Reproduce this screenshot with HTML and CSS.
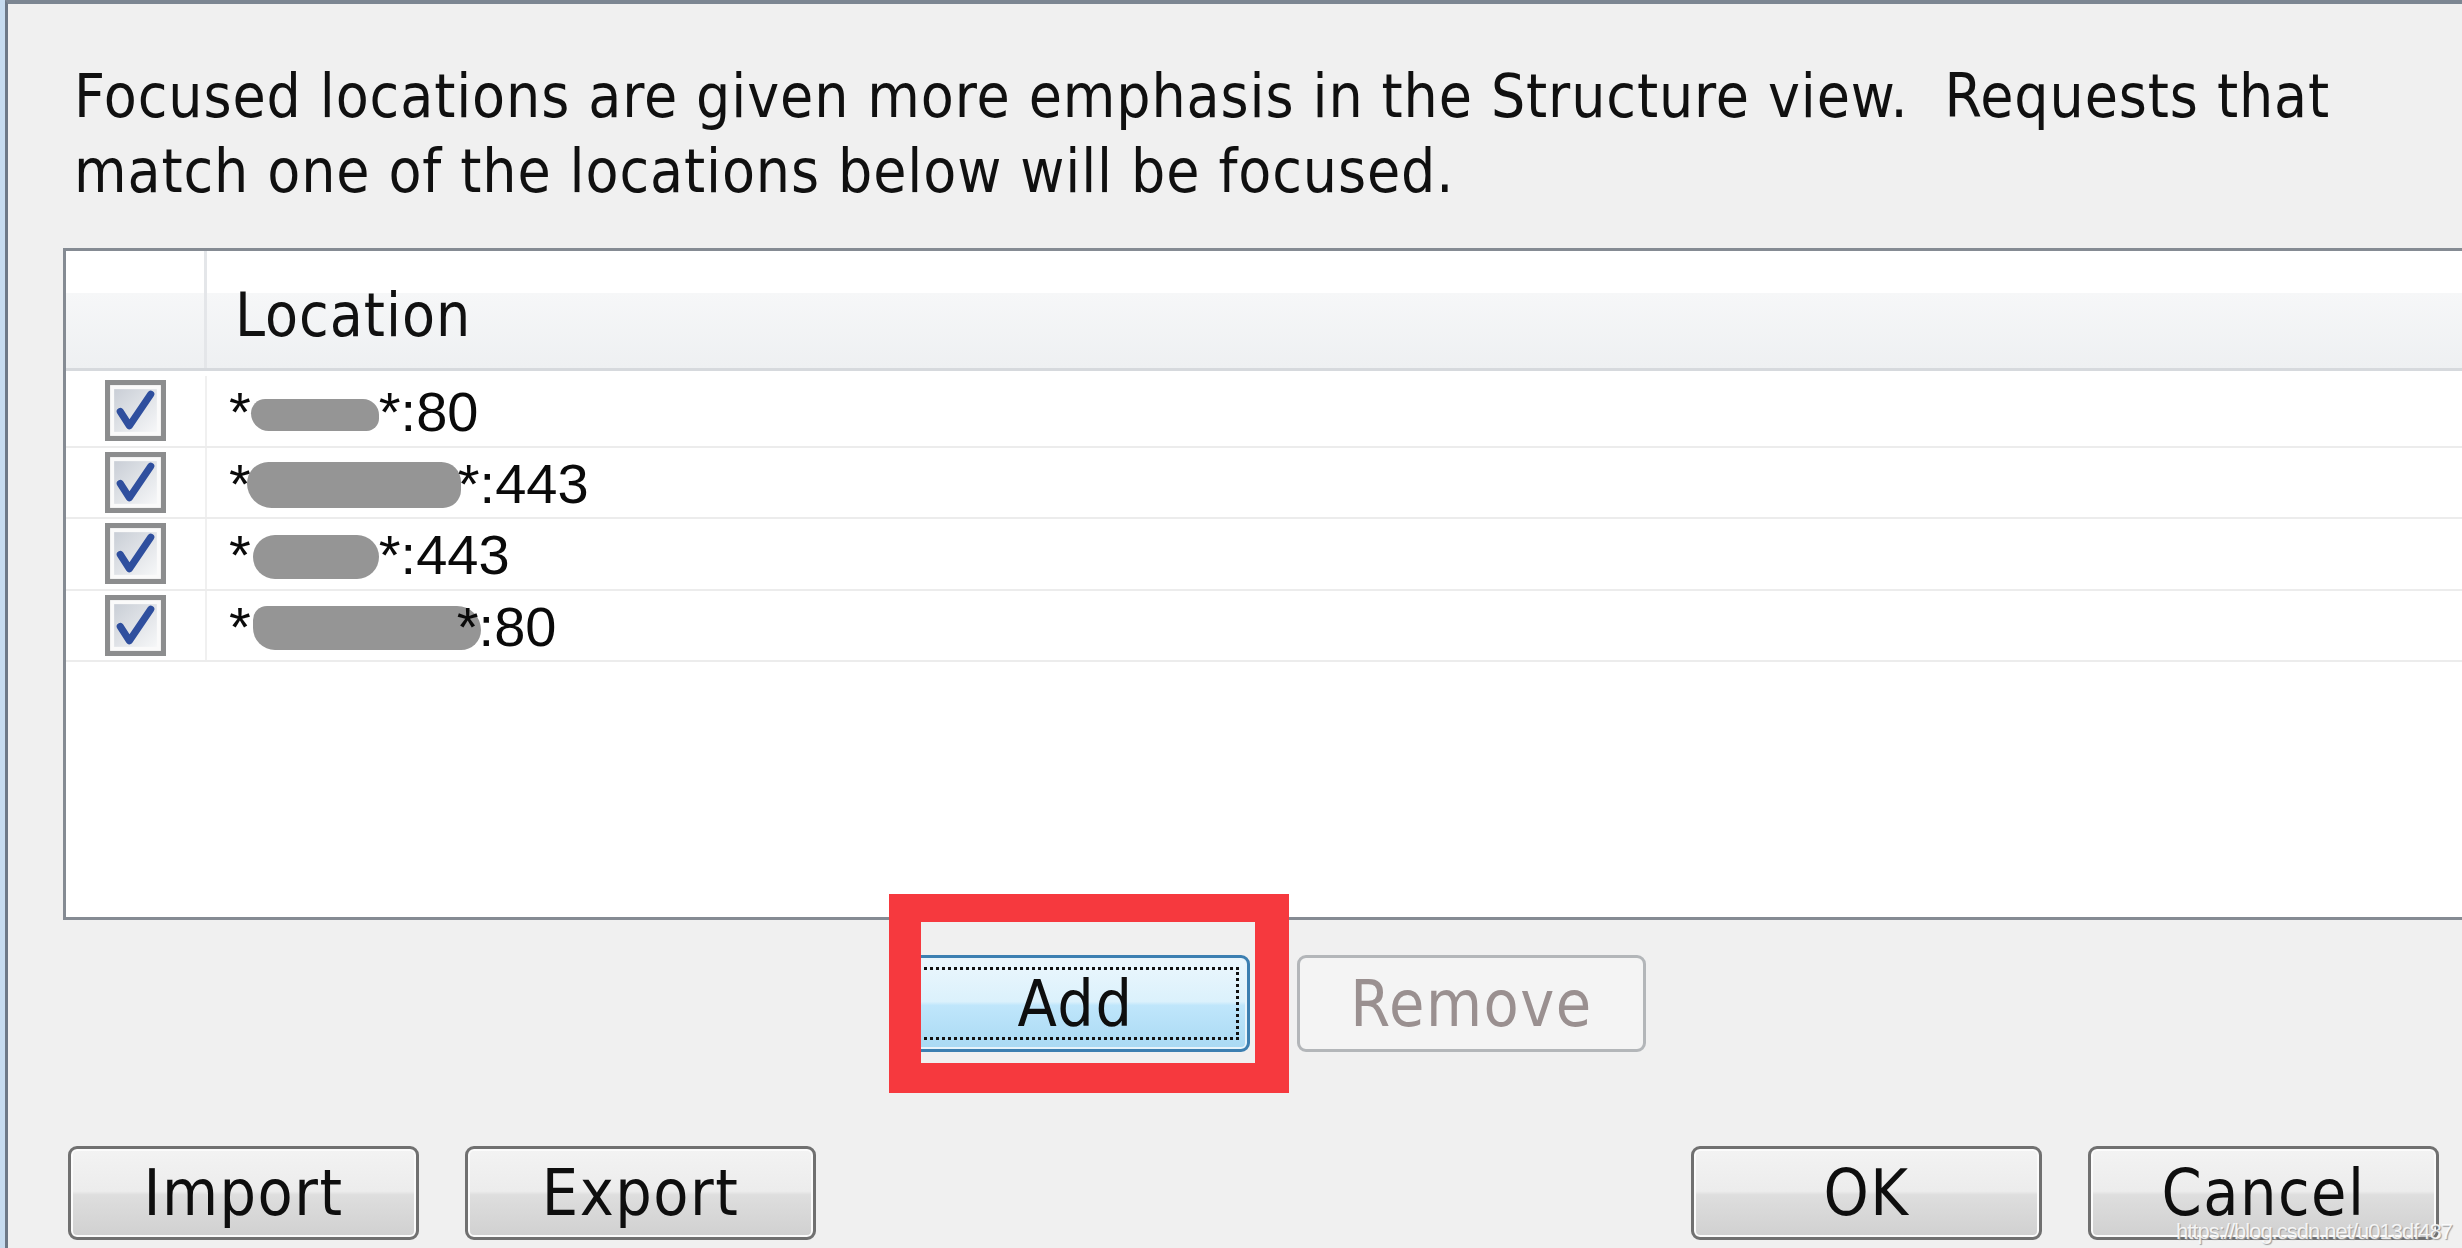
FILE: index.html
```html
<!DOCTYPE html>
<html>
<head>
<meta charset="utf-8">
<link rel="stylesheet" href="styles.css">
</head>
<body>
<div class="window">
  <div class="dialog">
    <p class="desc">Focused locations are given more emphasis in the Structure view.&nbsp; Requests that<br>match one of the locations below will be focused.</p>

    <div class="table">
      <div class="thead">
        <div class="th th-check"></div>
        <div class="th th-loc">Location</div>
      </div>
      <div class="row row-first">
        <div class="cell-check"><svg class="cb" viewBox="0 0 60 60"><defs><linearGradient id="g1" x1="0" y1="0" x2="1" y2="1"><stop offset="0" stop-color="#c9ced6"/><stop offset="1" stop-color="#f6f7f8"/></linearGradient></defs><rect x="2.5" y="2.5" width="55" height="55" fill="#fafafa" stroke="#8c8d8e" stroke-width="5"/><rect x="9" y="9" width="42" height="42" fill="url(#g1)"/><path d="M15 31 L24 45 L45 14" stroke="#2f4f9e" stroke-width="7" fill="none" stroke-linecap="round" stroke-linejoin="round"/></svg></div>
        <div class="cell-loc">*<span class="blob b1"></span>*:80</div>
      </div>
      <div class="row">
        <div class="cell-check"><svg class="cb" viewBox="0 0 60 60"><rect x="2.5" y="2.5" width="55" height="55" fill="#fafafa" stroke="#8c8d8e" stroke-width="5"/><rect x="9" y="9" width="42" height="42" fill="url(#g1)"/><path d="M15 31 L24 45 L45 14" stroke="#2f4f9e" stroke-width="7" fill="none" stroke-linecap="round" stroke-linejoin="round"/></svg></div>
        <div class="cell-loc">*<span class="blob b2"></span>*:443</div>
      </div>
      <div class="row">
        <div class="cell-check"><svg class="cb" viewBox="0 0 60 60"><rect x="2.5" y="2.5" width="55" height="55" fill="#fafafa" stroke="#8c8d8e" stroke-width="5"/><rect x="9" y="9" width="42" height="42" fill="url(#g1)"/><path d="M15 31 L24 45 L45 14" stroke="#2f4f9e" stroke-width="7" fill="none" stroke-linecap="round" stroke-linejoin="round"/></svg></div>
        <div class="cell-loc">*<span class="blob b3"></span>*:443</div>
      </div>
      <div class="row">
        <div class="cell-check"><svg class="cb" viewBox="0 0 60 60"><rect x="2.5" y="2.5" width="55" height="55" fill="#fafafa" stroke="#8c8d8e" stroke-width="5"/><rect x="9" y="9" width="42" height="42" fill="url(#g1)"/><path d="M15 31 L24 45 L45 14" stroke="#2f4f9e" stroke-width="7" fill="none" stroke-linecap="round" stroke-linejoin="round"/></svg></div>
        <div class="cell-loc">*<span class="blob b4"></span>*:80</div>
      </div>
      <div class="table-rest"></div>
    </div>

    <div class="actions">
      <div class="btn btn-add"><span>Add</span></div>
      <div class="btn btn-disabled">Remove</div>
      <div class="highlight"></div>
    </div>

    <div class="footer">
      <div class="group">
        <div class="btn">Import</div>
        <div class="btn">Export</div>
      </div>
      <div class="group">
        <div class="btn">OK</div>
        <div class="btn">Cancel</div>
      </div>
    </div>
  </div>
  <div class="watermark">https://blog.csdn.net/u013df487</div>
</div>
</body>
</html>
```

FILE: styles.css
```css
html, body {
  margin: 0;
  padding: 0;
}
body {
  width: 2462px;
  height: 1248px;
  overflow: hidden;
  background: #c6dbef;
  font-family: "DejaVu Sans Condensed", "DejaVu Sans", sans-serif;
  color: #111;
}
.window {
  position: relative;
  box-sizing: border-box;
  height: 1248px;
  margin-left: 5px;
  border-left: 3px solid #6d7886;
  border-top: 4px solid #7c8692;
  background: #f0f0f0;
}
.dialog {
  padding: 55px 0 0 55px;
}
.desc {
  margin: 0 0 39px 11px;
  font-size: 60px;
  letter-spacing: 0.9px;
  line-height: 75px;
  white-space: nowrap;
  color: #101010;
}
.table {
  box-sizing: border-box;
  height: 672px;
  margin-right: -60px;
  border: 3px solid #858b93;
  background: #fff;
  display: flex;
  flex-direction: column;
}
.thead {
  display: flex;
  height: 120px;
  box-sizing: border-box;
  border-bottom: 3px solid #d6d9dd;
  background: linear-gradient(#ffffff 0, #ffffff 36%, #f6f7f8 36%, #eef0f2 100%);
}
.th-check {
  width: 141px;
  border-right: 3px solid #e4e6e9;
  box-sizing: border-box;
}
.th-loc {
  flex: 1;
  padding: 12px 0 0 28px;
  font-size: 60px;
  letter-spacing: 1px;
  line-height: 104px;
  color: #111;
}
.row {
  display: flex;
  height: 71.5px;
  box-sizing: border-box;
  border-bottom: 2px solid #ececec;
}
.row-first {
  margin-top: 5px;
}
.cell-check {
  width: 141px;
  box-sizing: border-box;
  border-right: 2px solid #f0f0f0;
  display: flex;
  align-items: center;
  justify-content: center;
}
.cb {
  width: 61px;
  height: 61px;
  display: block;
}
.cell-loc {
  flex: 1;
  padding-left: 22px;
  font-family: "Liberation Sans", Arial, sans-serif;
  font-size: 56px;
  line-height: 72px;
  white-space: nowrap;
  color: #0a0a0a;
}
.blob {
  display: inline-block;
  background: #959595;
  border-radius: 22px;
}
.b1 { width: 128px; height: 32px; vertical-align: 0px; border-radius: 16px 18px 14px 20px; }
.b2 { width: 214px; height: 46px; margin-left: -4px; margin-right: -3px; vertical-align: -5px; border-radius: 26px 24px 22px 30px; }
.b3 { width: 126px; height: 44px; margin-left: 2px; vertical-align: -5px; border-radius: 24px; }
.b4 { width: 228px; height: 44px; margin-left: 2px; margin-right: -24px; vertical-align: -4px; border-radius: 14px 24px 20px 22px; }
.table-rest {
  flex: 1;
}
.actions {
  position: relative;
  display: flex;
  gap: 47px;
  margin-top: 35px;
  padding-left: 838px;
}
.btn {
  box-sizing: border-box;
  width: 351px;
  height: 94px;
  display: flex;
  align-items: center;
  justify-content: center;
  border: 3px solid #707070;
  border-radius: 9px;
  box-shadow: inset 0 0 0 2px #fbfbfb;
  background: linear-gradient(#f3f3f3 0, #ececec 48%, #dedede 52%, #d0d0d0 100%);
  font-size: 64px;
  line-height: 54px;
  letter-spacing: 1.5px;
  color: #0e0e0e;
}
.btn-add {
  width: 349px;
  height: 97px;
  position: relative;
  border-color: #3c7fb1;
  box-shadow: inset 0 0 0 2px #e8f4fb;
  background: linear-gradient(#ecf7fd 0, #dbf1fc 48%, #bfe6fb 52%, #a9d9f3 100%);
}
.btn-add::after {
  content: "";
  position: absolute;
  left: 8px; right: 8px; top: 9px; bottom: 9px;
  border: 3px dotted #111;
}
.btn-disabled {
  width: 349px;
  height: 97px;
  border-color: #b3b6b9;
  box-shadow: none;
  background: #f4f4f4;
  color: #9a9090;
}
.highlight {
  position: absolute;
  left: 826px;
  top: -61px;
  width: 400px;
  height: 199px;
  box-sizing: border-box;
  border-style: solid;
  border-color: #f6393e;
  border-width: 28px 34px 30px 32px;
}
.footer {
  display: flex;
  justify-content: space-between;
  margin-top: 94px;
  padding: 0 23px 0 5px;
}
.group {
  display: flex;
  gap: 46px;
}
.watermark {
  position: absolute;
  right: 10px;
  bottom: 6px;
  font-family: "Liberation Sans", Arial, sans-serif;
  font-size: 22px;
  line-height: 20px;
  color: rgba(255,255,255,0.85);
  text-shadow: 1px 1px 1px #9a9a9a;
  letter-spacing: -1px;
}
```
